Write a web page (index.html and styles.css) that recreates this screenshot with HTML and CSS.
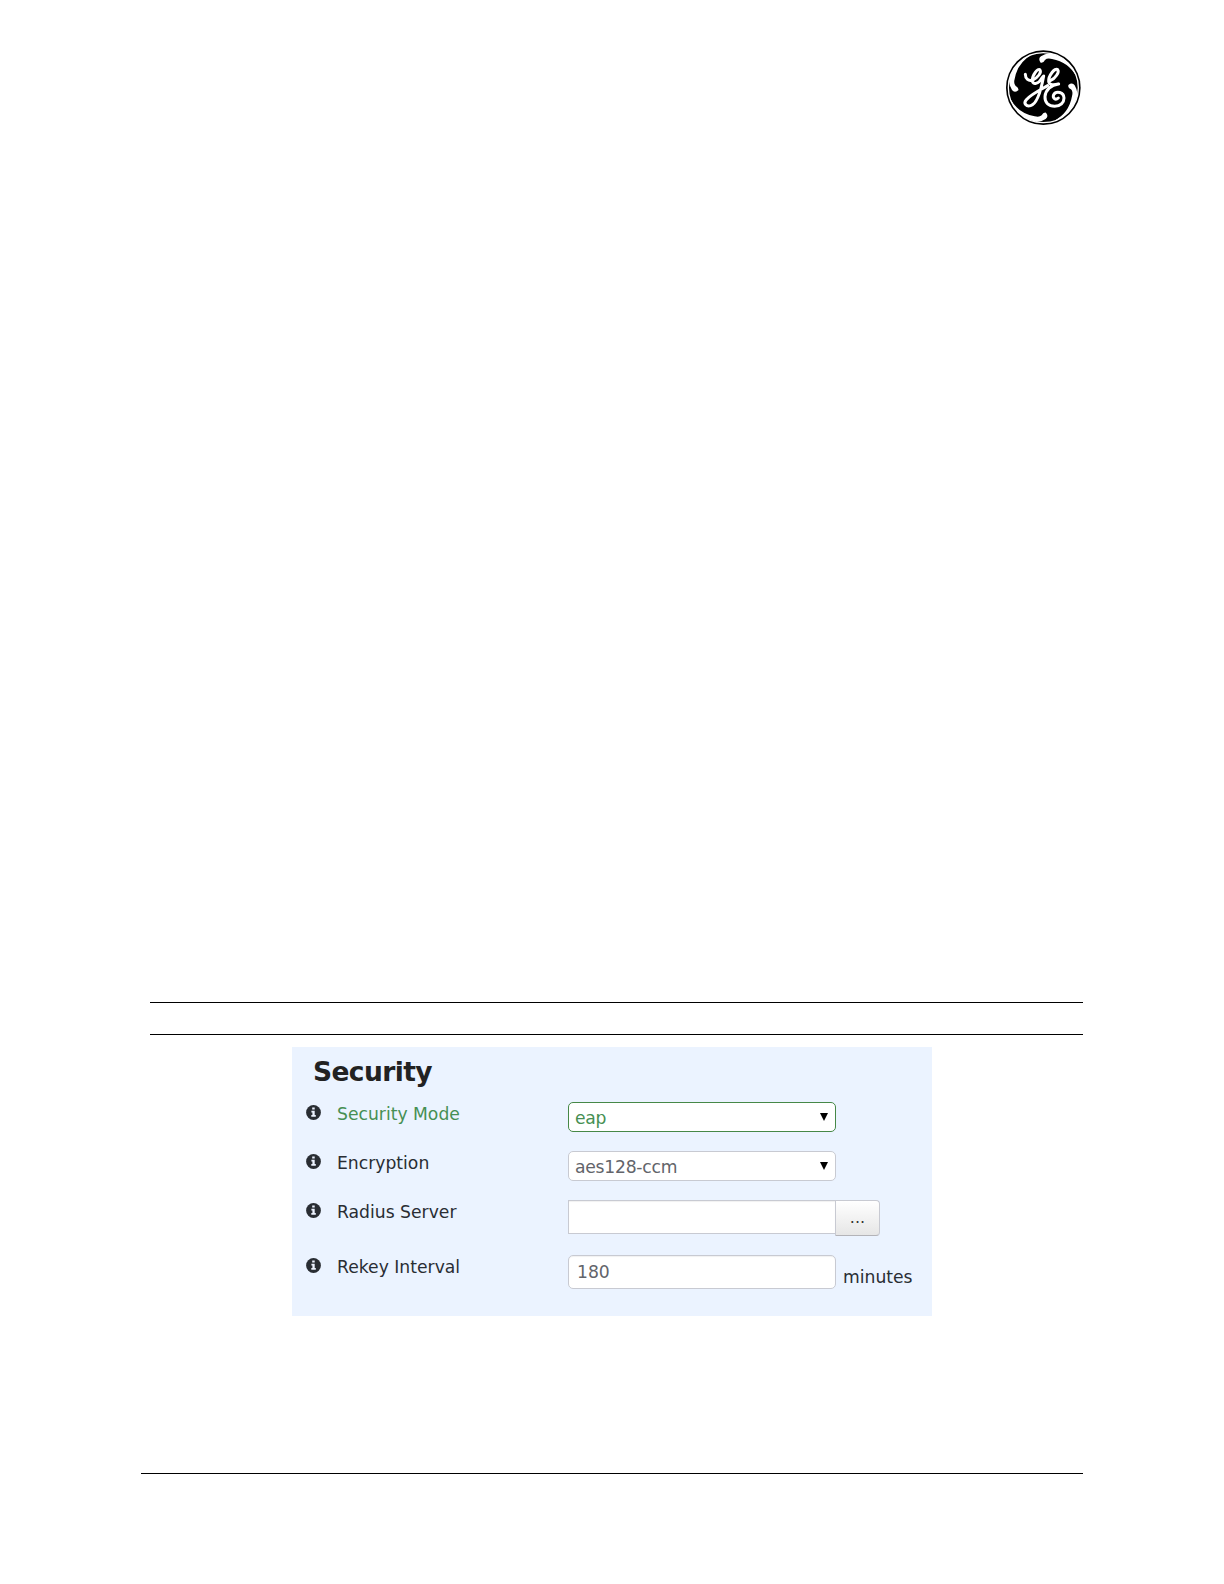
FILE: index.html
```html
<!DOCTYPE html>
<html lang="en">
<head>
    <meta charset="UTF-8">
    <meta name="viewport" content="width=device-width, initial-scale=1.0">
    <title>Security</title>
    <link rel="stylesheet" href="styles.css">
</head>
<body>
    <svg class="symbols" aria-hidden="true">
        <symbol id="info" viewBox="0 0 15 15">
            <circle cx="7.5" cy="7.5" r="7.4" fill="#292d33"/>
            <path d="M6.2 2.6h2.5v2H6.2zM5.4 5.8h3.3v4.3h1.1v1.7H5.3v-1.7h1.1V7.4h-1z" fill="#edf3ff"/>
        </symbol>
    </svg>
    <header class="page-header">
        <svg class="logo" viewBox="0 0 288 288" role="img" aria-label="GE">
            <defs>
                <path id="swoosh" d="M-8-75Q-17-87-7-94Q4-101 20-103A105 105 0 0 1 100-32A104 104 0 0 0 26-86Q12-90 5-83Q0-73-8-75Z"/>
            </defs>
            <circle cx="142" cy="140" r="112"/>
            <circle class="ring" cx="142" cy="140" r="105"/>
            <g transform="translate(142 140)" fill="#fff">
                <use href="#swoosh"/>
                <use href="#swoosh" transform="rotate(90)"/>
                <use href="#swoosh" transform="rotate(180)"/>
                <use href="#swoosh" transform="rotate(270)"/>
            </g>
            <path class="script" d="M88 100C88 113 98 122 110 117C126 110 137 94 132 87C126 79 108 103 109 119C110 133 128 129 137 112L143 105C137 138 125 188 104 194C91 198 81 187 91 176C105 160 134 146 155 134"/>
            <path class="script" d="M163 119C178 113 191 93 185 86C177 78 157 105 158 121C159 131 167 133 188 129C165 131 148 148 147 167C146 185 158 196 176 196C193 196 204 185 204 171C204 153 180 148 173 161C169 171 178 179 187 171"/>
        </svg>
    </header>

    <main>
        <div class="caption"></div>
        <section class="panel">
            <h1>Security</h1>
            <div class="row changed">
                <svg class="info"><use href="#info"/></svg>
                <label>Security Mode</label>
                <div class="select"><span>eap</span><i class="arrow"></i></div>
            </div>
            <div class="row">
                <svg class="info"><use href="#info"/></svg>
                <label>Encryption</label>
                <div class="select"><span>aes128-ccm</span><i class="arrow"></i></div>
            </div>
            <div class="row server">
                <svg class="info"><use href="#info"/></svg>
                <label>Radius Server</label>
                <input class="square" type="text" aria-label="Radius Server">
                <button type="button">...</button>
            </div>
            <div class="row">
                <svg class="info"><use href="#info"/></svg>
                <label>Rekey Interval</label>
                <input type="text" value="180" aria-label="Rekey Interval">
                <span class="unit">minutes</span>
            </div>
        </section>
    </main>
    <footer></footer>
</body>
</html>
```
FILE: styles.css
```css
* {
    box-sizing: border-box;
}
body {
    margin: 0;
    height: 1584px;
    background: #fff;
    color: #292d33;
    font-family: Verdana, "DejaVu Sans", sans-serif;
    font-size: 17.2px;
    line-height: 24px;
}
.symbols {
    display: none;
}
.page-header {
    display: flex;
    justify-content: flex-end;
    height: 1002px;
    padding: 41px 132px 0 0;
}
.logo {
    width: 96px;
    height: 96px;
}
.ring {
    fill: none;
    stroke: #fff;
    stroke-width: 4;
}
.script {
    fill: none;
    stroke: #fff;
    stroke-width: 9;
    stroke-linecap: round;
    stroke-linejoin: round;
}
.caption {
    height: 33px;
    margin: 0 141px 12px 150px;
    border-top: 1px solid #000;
    border-bottom: 1px solid #000;
}
.panel {
    width: 640px;
    height: 269px;
    margin-left: 292px;
    padding: 9px 0 0 14px;
    background: #ebf3ff;
}
h1 {
    margin: 0 0 14px 7px;
    font-size: 26.5px;
    line-height: 32px;
    letter-spacing: -0.6px;
    color: #222;
}
.row {
    display: flex;
    align-items: flex-start;
    height: 49px;
}
.server {
    height: 55px;
}
.info {
    width: 15px;
    height: 15px;
    margin: 3px 15px 0 0;
}
label {
    width: 232px;
    padding-left: 1px;
}
.select,
input {
    width: 268px;
    border: 1px solid #c8cad2;
    border-radius: 5px;
    background: #fff;
    color: #62646a;
}
.select {
    display: flex;
    justify-content: space-between;
    height: 30px;
    padding: 3px 7px 0 6px;
    letter-spacing: -0.25px;
}
input {
    height: 34px;
    padding: 0 8px;
    font: inherit;
    box-shadow: inset 0 1px 1px rgba(0, 0, 0, 0.06);
}
.square {
    border-radius: 0;
}
.arrow {
    margin-top: 7px;
    width: 8px;
    height: 8px;
    background: #000;
    clip-path: polygon(0 0, 100% 0, 50% 100%);
}
.changed label,
.changed .select {
    color: #468f53;
}
.changed .select {
    border-color: #468847;
}
button {
    width: 45px;
    height: 36px;
    margin-left: -1px;
    padding: 0;
    border: 1px solid #c8cad2;
    border-bottom-color: #b3b3b8;
    border-radius: 0 4px 4px 0;
    background: linear-gradient(#fff, #e6e6e6);
    color: #333;
    font: inherit;
    font-size: 16px;
}
.unit {
    margin: 10px 0 0 7px;
}
footer {
    height: 1px;
    margin: 157px 141px 0;
    background: #000;
}
```
